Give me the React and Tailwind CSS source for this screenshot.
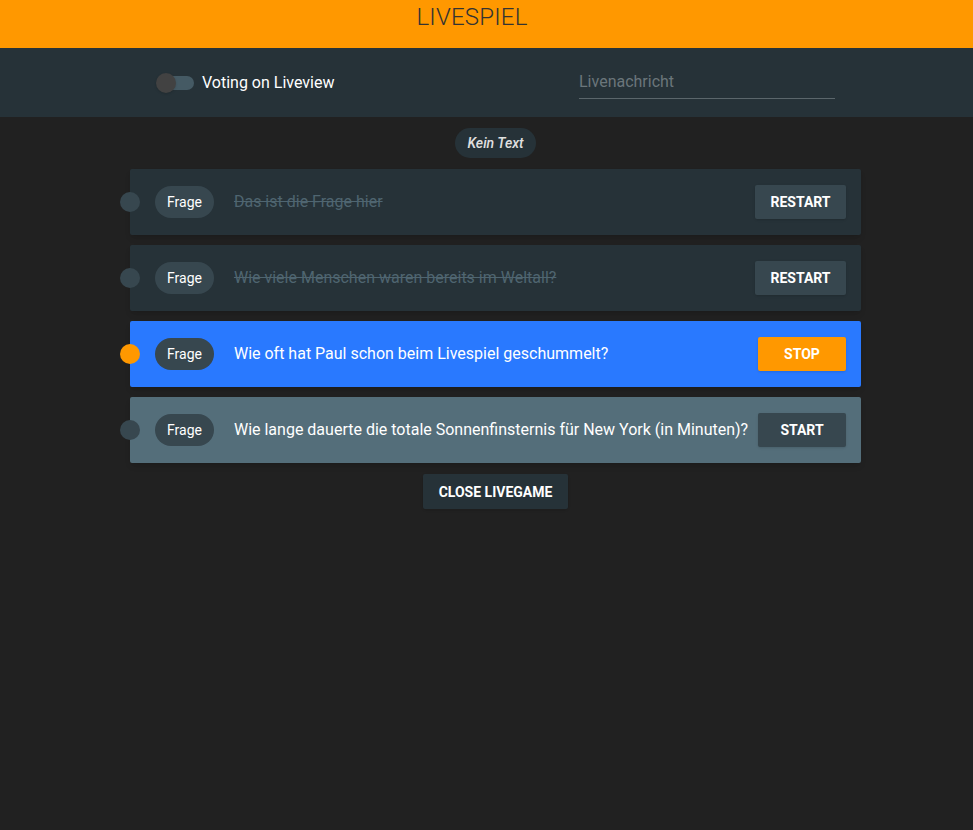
import React from 'react'

const questions = [
  { text: 'Das ist die Frage hier', state: 'done' },
  { text: 'Wie viele Menschen waren bereits im Weltall?', state: 'done' },
  { text: 'Wie oft hat Paul schon beim Livespiel geschummelt?', state: 'active' },
  { text: 'Wie lange dauerte die totale Sonnenfinsternis für New York (in Minuten)?', state: 'next' },
]

function QuestionRow({ text, state }) {
  const rowBg = state === 'active' ? 'bg-[#2979ff]' : state === 'next' ? 'bg-[#546e7a]' : 'bg-[#263238]'
  const dot = state === 'active' ? 'bg-[#ff9800]' : 'bg-[#37474f]'
  return (
    <div className={`flex items-center h-[66px] w-[731px] rounded-[2px] shadow-md pr-[15px] ${rowBg}`}>
      <span className={`-ml-[10px] w-5 h-5 rounded-full shrink-0 ${dot}`} />
      <span className="ml-[15px] h-8 px-3 rounded-full bg-[#37474f] text-white text-[14px] flex items-center shrink-0">
        Frage
      </span>
      <span
        className={`ml-5 text-base flex-1 whitespace-nowrap ${
          state === 'done' ? 'text-[#4f6570] line-through' : 'text-white'
        }`}
      >
        {text}
      </span>
      {state === 'done' && (
        <button className="h-[34px] w-[91px] rounded-[2px] bg-[#37474f] text-white text-sm font-bold shadow">
          RESTART
        </button>
      )}
      {state === 'active' && (
        <button className="h-[34px] w-[88px] rounded-[2px] bg-[#ff9800] text-white text-sm font-bold shadow">
          STOP
        </button>
      )}
      {state === 'next' && (
        <button className="h-[34px] w-[88px] rounded-[2px] bg-[#37474f] text-white text-sm font-bold shadow">
          START
        </button>
      )}
    </div>
  )
}

export default function App() {
  return (
    <div className="min-h-[830px] bg-[#212121] font-['Roboto','Liberation_Sans',sans-serif]">
      <header className="h-12 bg-[#ff9800] flex justify-center pr-[29px] shadow">
        <h1 className="text-2xl font-light text-[#333] leading-[34px] tracking-[0.2px]">LIVESPIEL</h1>
      </header>

      <div className="h-[69px] bg-[#263238] flex items-center pl-[156px]">
        <div className="relative w-[38px] h-5 flex items-center">
          <span className="absolute left-[6px] right-0 h-[14px] rounded-full bg-[#455a64]" />
          <span className="absolute left-0 w-5 h-5 rounded-full bg-[#424242] shadow" />
        </div>
        <span className="ml-2 text-white text-base">Voting on Liveview</span>
        <div className="ml-auto mr-[138px] w-[256px] pt-[3px] border-b border-[#5b666b] h-[32px]">
          <span className="text-base text-[#6b767b]">Livenachricht</span>
        </div>
      </div>

      <main className="flex flex-col items-center pl-[18px] pt-[11px]">
        <span className="h-[30px] px-3 rounded-full bg-[#263238] text-[#e0e0e0] text-sm italic font-medium flex items-center">
          Kein Text
        </span>
        <div className="mt-[11px] flex flex-col gap-[10px]">
          {questions.map((q, i) => (
            <QuestionRow key={i} {...q} />
          ))}
        </div>
        <button className="mt-[11px] h-[35px] w-[145px] rounded-[2px] bg-[#263238] text-white text-sm font-bold shadow">
          CLOSE LIVEGAME
        </button>
      </main>
    </div>
  )
}
